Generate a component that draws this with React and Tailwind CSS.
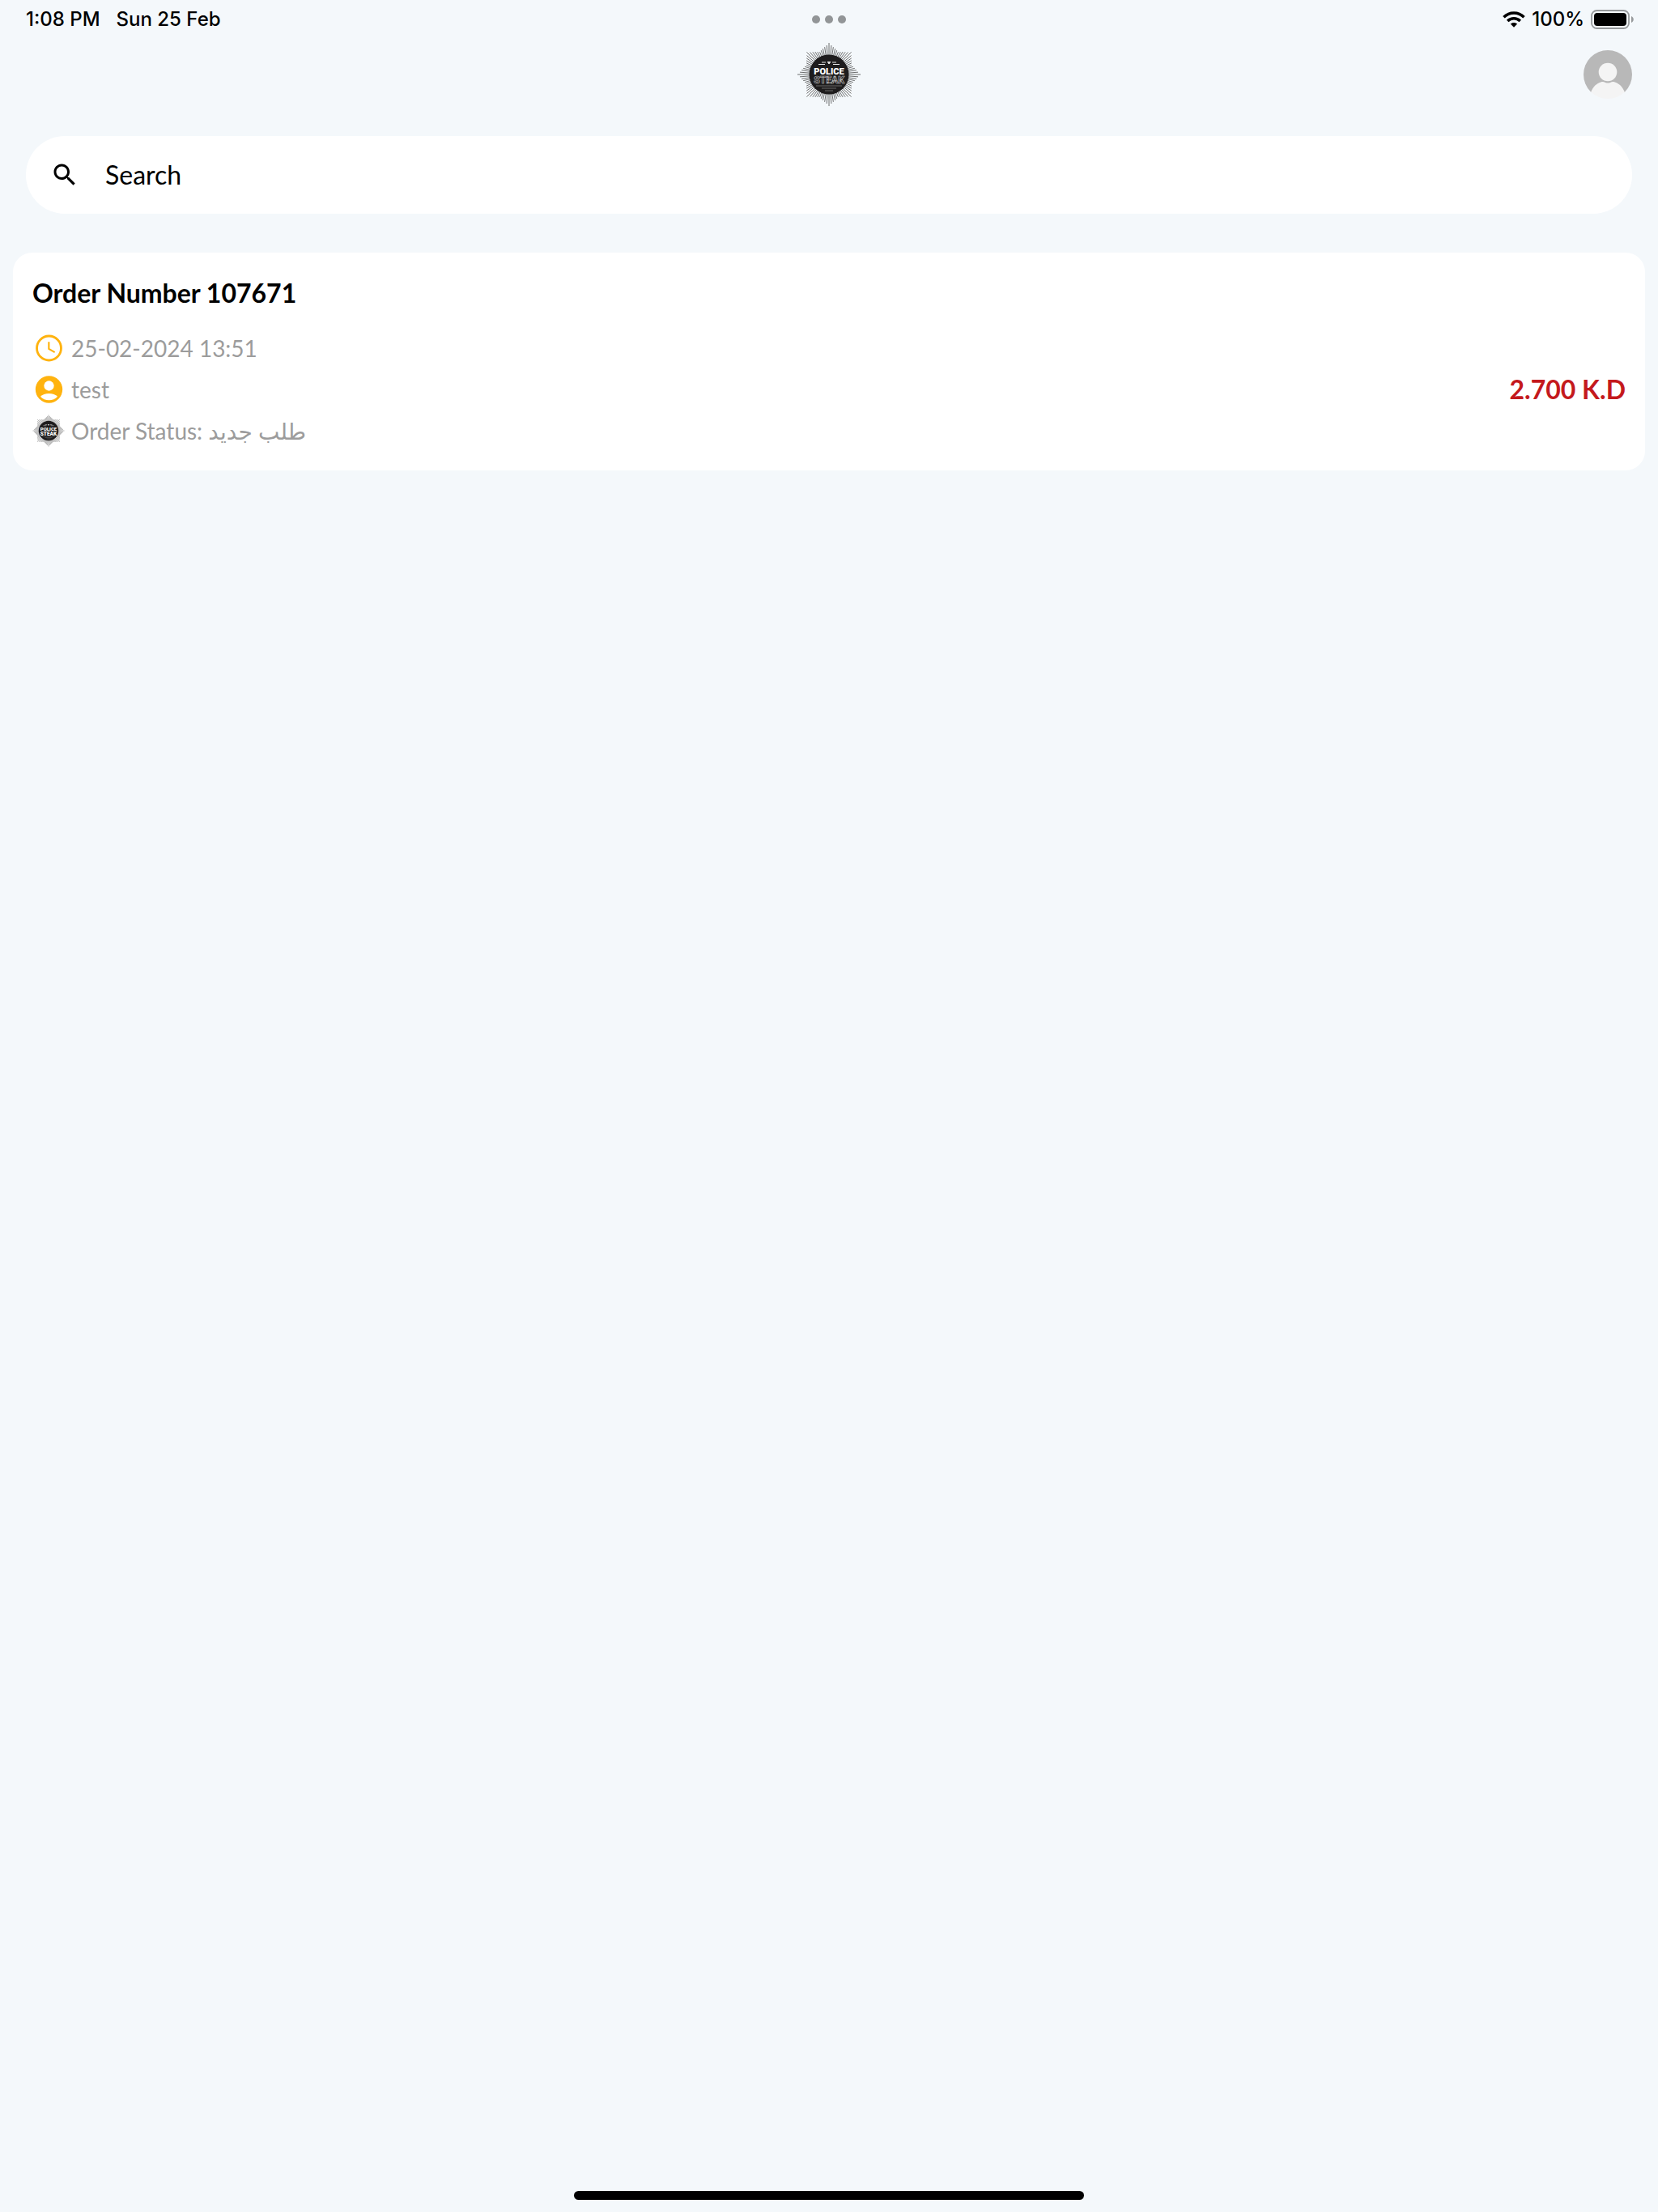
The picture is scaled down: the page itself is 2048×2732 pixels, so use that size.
import React from "react";

const POINTS = 8;
const RAYS_PER_POINT = 10;

const RAYS = Array.from({ length: POINTS * RAYS_PER_POINT }, (_, i) => {
  const angle = (i / (POINTS * RAYS_PER_POINT)) * Math.PI * 2;
  const k = i % RAYS_PER_POINT;
  const d = Math.min(k, RAYS_PER_POINT - k) / (RAYS_PER_POINT / 2);
  const length = 39 - 9 * Math.pow(d, 0.7);
  return {
    x1: 24 * Math.cos(angle),
    y1: 24 * Math.sin(angle),
    x2: length * Math.cos(angle),
    y2: length * Math.sin(angle),
  };
});

function Badge({ className, small = false }) {
  return (
    <svg viewBox="-40 -40 80 80" className={className} role="img" aria-label="Police Steak">
      <g stroke={small ? "#6a6a6a" : "#4a4a4a"} strokeWidth={small ? 1 : 0.8}>
        {RAYS.map((r, i) => (
          <line key={i} x1={r.x1} y1={r.y1} x2={r.x2} y2={r.y2} />
        ))}
      </g>
      <circle r="24.5" fill="#1e1c1d" />
      <g stroke="#e8e8e8" strokeWidth="1">
        <path d="M-13 -12.500H-5M5 -12.500H13M-9 -15H-4M4 -15H9" />
        <path d="M-2 -16L0 -13L2 -16" fill="#e8e8e8" />
      </g>
      <text
        y={small ? 0 : 0}
        textAnchor="middle"
        className="font-['Roboto',sans-serif] font-black"
        fontSize={small ? 12 : 11}
        fill="#fff"
      >
        POLICE
      </text>
      <text
        y={small ? 12 : 11}
        textAnchor="middle"
        className="font-['Roboto',sans-serif] font-black"
        fontSize={small ? 13 : 12}
        fill={small ? "#fff" : "#1e1c1d"}
        stroke={small ? "none" : "#c4c4c4"}
        strokeWidth="0.6"
      >
        STEAK
      </text>
      <path d="M-16 14H16M-9 17H9M-5 20H5" stroke="#8a8a8a" strokeWidth="0.7" />
    </svg>
  );
}

function WifiIcon() {
  return (
    <svg viewBox="0 0 28 20" className="h-5 w-7" aria-hidden="true">
      <g fill="none" stroke="#000" strokeWidth="3.6">
        <path d="M1.500 7.300C8.500 0.200 19.500 0.200 26.500 7.300" />
        <path d="M6.200 12C10.600 7.700 17.400 7.700 21.800 12" />
      </g>
      <path d="M14 19.800L9.800 15.500C12.200 13.400 15.800 13.400 18.200 15.500Z" />
    </svg>
  );
}

function BatteryIcon() {
  return (
    <svg viewBox="0 0 54 24" className="h-6 w-[54px]" aria-hidden="true">
      <rect x="1" y="1" width="46" height="22" rx="6.500" fill="none" stroke="#96999b" strokeWidth="1.800" />
      <rect x="4" y="4" width="40" height="16" rx="4" />
      <path d="M50 8C53.700 9.400 53.700 14.600 50 16Z" fill="#96999b" />
    </svg>
  );
}

function StatusBar() {
  return (
    <div className="grid h-12 grid-cols-3 items-center px-8 font-['Inter',sans-serif] text-2xl font-medium text-black">
      <div className="flex gap-5">
        <span>1:08 PM</span>
        <span>Sun 25 Feb</span>
      </div>
      <div className="flex justify-center gap-[6px]">
        <span className="size-[10px] rounded-full bg-[#929597]" />
        <span className="size-[10px] rounded-full bg-[#929597]" />
        <span className="size-[10px] rounded-full bg-[#929597]" />
      </div>
      <div className="-mr-[3px] flex items-center justify-end gap-2">
        <WifiIcon />
        <span>100%</span>
        <BatteryIcon />
      </div>
    </div>
  );
}

function Header() {
  return (
    <header className="grid h-22 grid-cols-3 items-center px-8">
      <span />
      <Badge className="size-20 justify-self-center" />
      <button type="button" aria-label="Profile" className="size-[60px] justify-self-end rounded-full">
        <svg viewBox="0 0 60 60" className="size-full" aria-hidden="true">
          <defs>
            <clipPath id="avatar">
              <circle cx="30" cy="30" r="30" />
            </clipPath>
          </defs>
          <g clipPath="url(#avatar)">
            <path d="M0 0H60V52H0Z" fill="#b8b8b8" />
            <path
              d="M9 52C12 45 16 41 22 39.300C24 38.800 25.500 39.300 27 40Q30 41.200 33 40C34.500 39.300 36 38.800 38 39.300C44 41 48 45 51 52V60H9Z"
              fill="#f4f4f4"
            />
            <circle cx="30" cy="27" r="11.300" fill="#f4f4f4" />
          </g>
        </svg>
      </button>
    </header>
  );
}

function InfoRow({ icon, children }) {
  return (
    <li className="flex h-[51px] items-center gap-2">
      {icon}
      <span>{children}</span>
    </li>
  );
}

function ClockIcon() {
  return (
    <svg viewBox="0 0 24 24" className="size-10" fill="none" stroke="#ffb30f" aria-hidden="true">
      <circle cx="12.300" cy="12" r="9" strokeWidth="1.700" />
      <path d="M12.200 7.300v5.200l4.400 2.600" strokeWidth="1.300" />
    </svg>
  );
}

function PersonIcon() {
  return (
    <svg viewBox="0 0 24 24" className="size-10" aria-hidden="true">
      <circle cx="12.300" cy="12" r="10" fill="#ffb30f" />
      <circle cx="12.300" cy="9.300" r="3.700" fill="#fff" />
      <path d="M6 17.300C8.500 14.200 16.100 14.200 18.600 17.300C15.600 20.900 9 20.900 6 17.300Z" fill="#fff" />
    </svg>
  );
}

function OrderCard() {
  return (
    <article className="mx-4 mt-12 flex items-center justify-between rounded-3xl bg-white px-6 pt-7 pb-6 font-['Lato','DejaVu_Sans',sans-serif]">
      <div className="flex flex-col">
        <h2 className="mb-5 text-[32px] leading-[44px] font-bold text-black">Order Number 107671</h2>
        <ul className="flex flex-col text-[28px] leading-9 text-[#9c9c9c]">
          <InfoRow icon={<ClockIcon />}>25-02-2024 13:51</InfoRow>
          <InfoRow icon={<PersonIcon />}>test</InfoRow>
          <InfoRow icon={<Badge small className="size-10" />}>
            Order Status: <bdi lang="ar">طلب جديد</bdi>
          </InfoRow>
        </ul>
      </div>
      <p className="mt-16 text-[32px] leading-10 font-bold text-[#c4191d]">2.700 K.D</p>
    </article>
  );
}

export default function App() {
  return (
    <div className="flex min-h-screen flex-col bg-[#f4f8fb]">
      <StatusBar />
      <Header />
      <main className="flex-1">
        <label className="mx-8 mt-8 flex h-24 items-center gap-8 rounded-full bg-white px-[30px]">
          <svg viewBox="0 0 24 24" className="size-9 shrink-0" aria-hidden="true">
            <path d="M15.500 14h-.79l-.28-.27C15.410 12.590 16 11.110 16 9.500 16 5.910 13.090 3 9.500 3S3 5.910 3 9.500 5.910 16 9.500 16c1.610 0 3.090-.59 4.230-1.570l.27.28v.79l5 4.990L20.490 19l-4.990-5zm-6 0C7.010 14 5 11.990 5 9.500S7.010 5 9.500 5 14 7.010 14 9.500 11.990 14 9.500 14z" />
          </svg>
          <input
            type="text"
            aria-label="Search"
            placeholder="Search"
            className="min-w-0 flex-1 bg-transparent font-['Lato',sans-serif] text-[32px] leading-10 text-black outline-none placeholder:text-black"
          />
        </label>
        <OrderCard />
      </main>
      <div className="mb-[15px] h-[11px] w-[630px] self-center rounded-full bg-black" />
    </div>
  );
}
